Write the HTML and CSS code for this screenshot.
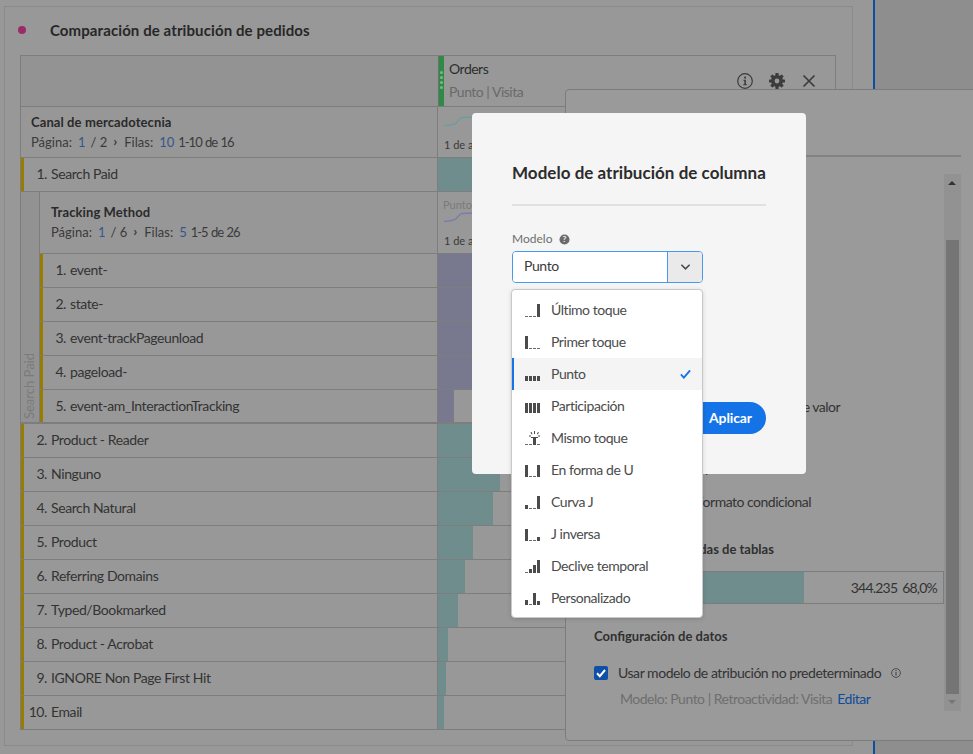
FILE: index.html
```html
<!DOCTYPE html>
<html lang="es">
<head>
<meta charset="utf-8">
<title>Comparación de atribución de pedidos</title>
<link rel="stylesheet" href="styles.css">
</head>
<body>
<div class="page">
  <main class="main">
    <section class="report">
      <header class="report-head">
        <span class="dot"></span>
        <h1 class="report-title">Comparación de atribución de pedidos</h1>
      </header>
      <div class="table">
        <div class="row head-row">
          <div class="label"></div>
          <div class="val metric">
            <div class="grip"><i></i><i></i><i></i><i></i></div>
            <div class="metric-text">
              <div class="metric-name">Orders</div>
              <div class="metric-sub">Punto | Visita</div>
            </div>
            <div class="metric-icons">
              <svg class="ico" viewBox="0 0 16 16"><circle cx="8" cy="8" r="7.300" fill="none" stroke="#3c3c3c" stroke-width="1.200"/><rect x="7.200" y="3.600" width="1.800" height="1.900" fill="#3c3c3c"/><path d="M6.400 6.800h2.500v4.400h1v1H6.200v-1h1.100V7.800h-.9z" fill="#3c3c3c"/></svg>
              <svg class="ico" viewBox="0 0 16 16"><g fill="#3c3c3c"><rect x="6.400" y="0" width="3.200" height="16" rx=".6"/><rect x="6.400" y="0" width="3.200" height="16" rx=".6" transform="rotate(45 8 8)"/><rect x="6.400" y="0" width="3.200" height="16" rx=".6" transform="rotate(90 8 8)"/><rect x="6.400" y="0" width="3.200" height="16" rx=".6" transform="rotate(135 8 8)"/><circle cx="8" cy="8" r="6"/></g><circle cx="8" cy="8" r="2.400" fill="#989898"/></svg>
              <svg class="ico" viewBox="0 0 16 16"><path d="M2.500 2.500l11 11M13.500 2.500l-11 11" stroke="#3c3c3c" stroke-width="1.700" fill="none"/></svg>
            </div>
          </div>
        </div>
        <div class="row dim-row">
          <div class="label dim">
            <div class="dim-name">Canal de mercadotecnia</div>
            <div class="pager">Página:<b>1</b>/ 2<span class="gt">›</span><span class="fil">Filas:</span><b>10</b><span class="rng">1-10 de 16</span></div>
          </div>
          <div class="val spark">
            <svg class="spark-line" viewBox="0 0 30 12"><path d="M0 10.500C5 10.500 8 9.500 11 9 14 7 15 3 18 2.500L30 2" fill="none" stroke="#6f9c9c" stroke-width="1.400"/></svg>
            <div class="spark-date">1 de agosto</div>
          </div>
        </div>
        <div class="row item"><div class="label"><span class="num">1.</span>Search Paid</div><div class="val"><span class="bar teal" style="width:100%"></span></div></div>
        <div class="nest">
          <div class="gutter"><span class="gutter-text">Search Paid</span></div>
          <div class="nest-body">
            <div class="row nest-head">
              <div class="label dim">
                <div class="dim-name">Tracking Method</div>
                <div class="pager">Página:<b>1</b>/ 6<span class="gt">›</span><span class="fil">Filas:</span><b>5</b><span class="rng">1-5 de 26</span></div>
              </div>
              <div class="val spark">
                <div class="spark-tag">Punto</div>
                <svg class="spark-line alt" viewBox="0 0 30 12"><path d="M0 10.500C5 10.500 8 9.500 11 8.500 14 6.500 15 3 18 2.500L30 2" fill="none" stroke="#7c7cae" stroke-width="1.400"/></svg>
                <div class="spark-date">1 de agosto</div>
              </div>
            </div>
            <div class="row item sub"><div class="label"><span class="num">1.</span>event-</div><div class="val"><span class="bar purple" style="width:100%"></span></div></div>
            <div class="row item sub"><div class="label"><span class="num">2.</span>state-</div><div class="val"><span class="bar purple" style="width:90%"></span></div></div>
            <div class="row item sub"><div class="label"><span class="num">3.</span>event-trackPageunload</div><div class="val"><span class="bar purple" style="width:60%"></span></div></div>
            <div class="row item sub"><div class="label"><span class="num">4.</span>pageload-</div><div class="val"><span class="bar purple" style="width:40%"></span></div></div>
            <div class="row item sub last"><div class="label"><span class="num">5.</span>event-am_InteractionTracking</div><div class="val"><span class="bar purple" style="width:16px"></span></div></div>
          </div>
        </div>
        <div class="row item"><div class="label"><span class="num">2.</span>Product - Reader</div><div class="val"><span class="bar teal" style="width:120px"></span></div></div>
        <div class="row item"><div class="label"><span class="num">3.</span>Ninguno</div><div class="val"><span class="bar teal" style="width:62px"></span></div></div>
        <div class="row item"><div class="label"><span class="num">4.</span>Search Natural</div><div class="val"><span class="bar teal" style="width:55px"></span></div></div>
        <div class="row item"><div class="label"><span class="num">5.</span>Product</div><div class="val"><span class="bar teal" style="width:35px"></span></div></div>
        <div class="row item"><div class="label"><span class="num">6.</span>Referring Domains</div><div class="val"><span class="bar teal" style="width:27px"></span></div></div>
        <div class="row item"><div class="label"><span class="num">7.</span>Typed/Bookmarked</div><div class="val"><span class="bar teal" style="width:20px"></span></div></div>
        <div class="row item"><div class="label"><span class="num">8.</span>Product - Acrobat</div><div class="val"><span class="bar teal" style="width:10px"></span></div></div>
        <div class="row item"><div class="label"><span class="num">9.</span>IGNORE Non Page First Hit</div><div class="val"><span class="bar teal" style="width:8px"></span></div></div>
        <div class="row item"><div class="label"><span class="num">10.</span>Email</div><div class="val"><span class="bar teal" style="width:6px"></span></div></div>
      </div>
    </section>
  </main>
  <aside class="rail"></aside>
</div>

<section class="panel">
  <div class="panel-head"></div>
  <div class="panel-body">
    <div class="panel-content">
      <div class="opt first">Interpretar cero como ausencia de valor</div>
      <div class="opt second">Mostrar el tiempo</div>
      <div class="opt third">Habilitar todo formato condicional</div>
      <div class="sect t1">Vista previa de celdas de tablas</div>
      <div class="preview">
        <span class="preview-bar"></span>
        <span class="preview-num">344.235</span><span class="preview-pct">68,0%</span>
      </div>
      <div class="sect t2">Configuración de datos</div>
      <div class="check-row">
        <span class="check"><svg viewBox="0 0 14 14"><path d="M3 7.200l2.800 3L11 4" fill="none" stroke="#fff" stroke-width="2"/></svg></span>
        <span>Usar modelo de atribución no predeterminado</span>
        <svg class="mini-info" viewBox="0 0 10 10"><circle cx="5" cy="5" r="4.400" fill="none" stroke="#3a3a3a" stroke-width=".8"/><rect x="4.500" y="2.200" width="1" height="1" fill="#3a3a3a"/><rect x="4.500" y="4" width="1" height="3.600" fill="#3a3a3a"/></svg>
      </div>
      <div class="model-line">Modelo: Punto | Retroactividad: Visita <a class="edit">Editar</a></div>
    </div>
    <div class="scrollbar">
      <span class="arrow up"></span>
      <span class="thumb"></span>
      <span class="arrow down"></span>
    </div>
  </div>
</section>

<section class="modal">
  <h2 class="modal-title">Modelo de atribución de columna</h2>
  <div class="modal-rule"></div>
  <div class="field-label">Modelo
    <svg class="help" viewBox="0 0 12 12"><circle cx="6" cy="6" r="5.500" fill="#6b6b6b"/><text x="6" y="9" text-anchor="middle" class="help-q">?</text></svg>
  </div>
  <div class="combo">
    <div class="combo-input">Punto</div>
    <div class="combo-btn"><svg viewBox="0 0 12 8"><path d="M1.500 1.500L6 6l4.500-4.500" fill="none" stroke="#4b4b4b" stroke-width="1.700"/></svg></div>
  </div>
  <div class="modal-foot"><button class="apply">Aplicar</button></div>

  <ul class="menu">
    <li class="opt-item"><svg class="mi" viewBox="0 0 15 14"><path class="d" d="M0 13h3v1H0zM4 13h3v1H4zM8 13h3v1H8z"/><rect x="12" y="1" width="3" height="13"/></svg>Último toque</li>
    <li class="opt-item"><svg class="mi" viewBox="0 0 15 14"><rect x="0" y="1" width="3" height="13"/><path class="d" d="M4 13h3v1H4zM8 13h3v1H8zM12 13h3v1h-3z"/></svg>Primer toque</li>
    <li class="opt-item selected"><svg class="mi" viewBox="0 0 15 14"><rect x="0" y="9" width="3" height="5"/><rect x="4" y="9" width="3" height="5"/><rect x="8" y="9" width="3" height="5"/><rect x="12" y="9" width="3" height="5"/></svg>Punto<svg class="tick" viewBox="0 0 12 10"><path d="M1 5.500L4.200 9 11 1" fill="none" stroke="#1473e6" stroke-width="2"/></svg></li>
    <li class="opt-item"><svg class="mi" viewBox="0 0 15 14"><rect x="0" y="4" width="3" height="10"/><rect x="4" y="4" width="3" height="10"/><rect x="8" y="4" width="3" height="10"/><rect x="12" y="4" width="3" height="10"/></svg>Participación</li>
    <li class="opt-item"><svg class="mi" viewBox="0 0 15 14"><path class="d" d="M0 13h3v1H0zM4 13h3v1H4zM12 13h3v1h-3z"/><path d="M6 6h7v1h-2v7H8V7H6z"/><path d="M9 0h1v3H9zM5.500 1l1 0 1 2-1 .4zM13 1l1 .4-1.300 2-.8-.5zM4 4.500h2v1H4zM13 4.500h2v1h-2z"/></svg>Mismo toque</li>
    <li class="opt-item"><svg class="mi" viewBox="0 0 15 14"><rect x="0" y="2" width="3" height="12"/><path class="d" d="M4 13h3v1H4zM8 13h3v1H8z"/><rect x="12" y="2" width="3" height="12"/></svg>En forma de U</li>
    <li class="opt-item"><svg class="mi" viewBox="0 0 15 14"><rect x="0" y="10" width="3" height="4"/><path class="d" d="M4 13h3v1H4zM8 13h3v1H8z"/><rect x="12" y="1" width="3" height="13"/></svg>Curva J</li>
    <li class="opt-item"><svg class="mi" viewBox="0 0 15 14"><rect x="0" y="2" width="3" height="12"/><path class="d" d="M4 13h3v1H4zM8 13h3v1H8z"/><rect x="12" y="10" width="3" height="4"/></svg>J inversa</li>
    <li class="opt-item"><svg class="mi" viewBox="0 0 15 14"><path class="d" d="M0 13h3v1H0z"/><rect x="4" y="10" width="3" height="4"/><rect x="8" y="6" width="3" height="8"/><rect x="12" y="1" width="3" height="13"/></svg>Declive temporal</li>
    <li class="opt-item"><svg class="mi" viewBox="0 0 15 14"><rect x="0" y="9" width="3" height="5"/><path class="d" d="M4 13h3v1H4z"/><rect x="8" y="2" width="3" height="12"/><rect x="12" y="10" width="3" height="4"/></svg>Personalizado</li>
  </ul>
</section>
</body>
</html>
```

FILE: styles.css
```css
* { box-sizing: border-box; }
html, body { margin: 0; padding: 0; height: 100%; overflow: hidden; }
body {
  background: #989898;
  font-family: "Lato", "Noto Sans", sans-serif;
  font-size: 14px;
  color: #2e2e2e;
  position: relative;
}

.page { display: flex; height: 754px; }
.main { width: 873px; padding: 6px 20px 0 4px; }
.rail { flex: 1; background: #8e8e8e; border-left: 2px solid #0c4e9f; }

.report { height: 740px; border: 1px solid #8a8a8a; padding: 0 16px 0 15px; }
.report-head { height: 46px; margin-bottom: 2px; display: flex; align-items: center; }
.dot { width: 8px; height: 8px; border-radius: 50%; background: #9b2a6b; margin-right: 24px; margin-left: -2px; flex: none; }
.report-title { margin: 0; font-size: 15px; font-weight: 700; letter-spacing: .1px; color: #272727; }

.table { border: 1px solid #7d7d7d; border-bottom: 0; height: 675px; }
.row { display: flex; border-bottom: 1px solid #7d7d7d; }
.label { flex: 1; min-width: 0; border-right: 1px solid #7d7d7d; }
.val { flex: 0 0 397px; position: relative; overflow: hidden; }

.head-row { height: 51px; background: #939393; }
.head-row .label { border-right: 0; }
.metric { display: flex; background: #989898; border-left: 1px solid #6f6f6f; }
.grip { width: 5px; background: #2e8b45; display: flex; flex-direction: column; align-items: center; gap: 2px; padding-top: 15px; flex: none; }
.grip i { width: 3px; height: 3px; border-radius: 50%; background: #7fb58d; }
.metric-text { padding: 4px 0 0 5px; letter-spacing: -.5px; }
.metric-name { height: 23px; line-height: 17px; color: #2e2e2e; }
.metric-sub { color: #6a6a6a; line-height: 17px; }
.metric-icons { margin-left: auto; display: flex; gap: 16px; padding: 17px 18px 0 0; }
.ico { width: 16px; height: 16px; display: block; }

.dim-row { height: 51px; }
.dim { padding: 7px 0 0 10px; background: #979797; }
.dim-name { font-weight: 700; font-size: 13px; line-height: 17px; letter-spacing: .1px; color: #2a2a2a; }
.pager { font-size: 13px; line-height: 18px; margin-top: 2px; color: #3a3a3a; display: flex; }
.pager b { font-weight: 400; color: #33568c; margin: 0 5px 0 6px; }
.gt { margin: 0 7px 0 6px; font-size: 14px; line-height: 15px; font-weight: 700; }
.rng { margin-left: -1px; letter-spacing: -1px; word-spacing: 1px; }

.spark { padding: 0 0 0 6px; }
.spark-line { position: absolute; left: 6px; top: 8px; width: 30px; height: 12px; display: block; }
.spark-date { position: absolute; left: 6px; bottom: 5px; font-size: 11px; line-height: 14px; white-space: nowrap; color: #3a3a3a; }
.spark-tag { position: absolute; left: 5px; top: 6px; font-size: 11px; line-height: 14px; color: #7a7a7a; }
.spark-line.alt { top: 19px; }

.item { height: 34px; }
.item .label { display: flex; align-items: center; border-left: 3px solid #977c00; font-size: 14px; line-height: 16px; letter-spacing: -.4px; color: #333; padding-bottom: 2px; }
.num { width: 23px; text-align: right; margin-right: 4px; flex: none; }
.bar { display: block; height: 100%; }
.teal { background: #6f8d8d; }
.purple { background: #78788f; }

.nest { display: flex; height: 232px; }
.gutter { width: 18px; background: #929292; flex: none; display: flex; align-items: flex-end; border-bottom: 2px solid #7d7d7d; }
.gutter-text { writing-mode: vertical-rl; transform: rotate(180deg); font-size: 13px; line-height: 14px; color: #7a7a7a; padding-top: 3px; margin-left: 1px; }
.nest-body { flex: 1; min-width: 0; border-left: 1px solid #7d7d7d; }
.nest-head { height: 62px; }
.nest-head .dim { padding: 12px 0 0 11px; }
.last { border-bottom: 2px solid #7d7d7d; }
.item.last .label { padding-bottom: 0; }

/* Settings side panel, lying over the report */
.panel {
  position: absolute; left: 565px; top: 89px; width: 418px; height: 652px;
  background: #9a9a9a; border: 1px solid #7c7c7c; border-radius: 4px;
  display: flex; flex-direction: column; overflow: hidden;
}
.panel-head { height: 67px; flex: none; border-bottom: 2px solid #838383; margin-right: 21px; }
.panel-body { display: flex; flex: 1; min-height: 0; }
.panel-content { flex: 1; min-width: 0; padding: 240px 6px 0 28px; font-size: 14px; letter-spacing: -.45px; color: #333; }
.opt, .sect, .check-row, .model-line { line-height: 20px; white-space: nowrap; }
.opt { padding-left: 24px; }
.first { letter-spacing: -.53px; }
.second { margin-top: 41px; }
.third { margin-top: 14px; letter-spacing: -.5px; }
.sect { font-weight: 700; font-size: 13px; letter-spacing: 0; color: #303030; }
.t1 { margin-top: 27px; }
.t2 { margin-top: 22px; }
.preview { margin-top: 12px; height: 33px; border: 1px solid #7c7c7c; display: flex; align-items: center; justify-content: flex-end; position: relative; padding-right: 6px; width: 350px; letter-spacing: -.8px; }
.preview-bar { position: absolute; left: 0; top: 0; bottom: 0; width: 209px; background: #6f8d8d; }
.preview-num { margin-right: 5px; }
.check-row { margin-top: 17px; display: flex; align-items: center; }
.check { width: 14px; height: 14px; background: #0e4fa8; border-radius: 2px; margin-right: 10px; display: block; }
.check svg { display: block; width: 14px; height: 14px; }
.mini-info { width: 10px; height: 10px; margin-left: 10px; }
.model-line { margin-top: 6px; padding-left: 26px; color: #6e6e6e; letter-spacing: -.5px; }
.edit { color: #0d4c9c; margin-left: 2px; }

.scrollbar { width: 17px; margin-top: 17px; height: 537px; background: #929292; margin-right: 21px; flex: none; position: relative; }
.thumb { position: absolute; left: 2px; right: 2px; top: 66px; bottom: 17px; background: #757575; }
.arrow { position: absolute; left: 4px; width: 0; height: 0; border-left: 4px solid transparent; border-right: 4px solid transparent; }
.arrow.up { top: 7px; border-bottom: 4px solid #333; }
.arrow.down { bottom: 7px; border-top: 4px solid #777; }

/* Modal dialog */
.modal {
  position: absolute; left: 472px; top: 113px; width: 334px; height: 361px;
  background: #f5f5f5; border-radius: 4px; padding: 48px 40px 0;
}
.modal-title { margin: 0; height: 24px; font-size: 17px; line-height: 24px; font-weight: 700; letter-spacing: .03px; color: #2c2c2c; white-space: nowrap; }
.modal-rule { height: 2px; background: #e1e1e1; margin-top: 19px; }
.field-label { margin-top: 25px; height: 16px; font-size: 12px; line-height: 16px; color: #6e6e6e; display: flex; align-items: center; }
.help { width: 11px; height: 11px; margin-left: 7px; }
.help-q { font-size: 9px; font-weight: 700; fill: #f5f5f5; }
.combo { margin-top: 4px; width: 191px; height: 32px; display: flex; border: 1px solid #4a97ee; border-radius: 4px; overflow: hidden; }
.combo-input { flex: 1; background: #fff; padding-left: 11px; font-size: 14px; line-height: 28px; letter-spacing: -.4px; color: #3a3a3a; border-right: 1px solid #4a97ee; }
.combo-btn { width: 34px; background: #eaeaea; display: flex; align-items: center; justify-content: center; }
.combo-btn svg { width: 11px; height: 8px; }
.modal-foot { display: flex; justify-content: flex-end; margin-top: 119px; }
.apply { width: 120px; height: 32px; border: 0; border-radius: 16px; background: #1473e6; color: #fff; font: 700 14px/32px "Lato", sans-serif; letter-spacing: -.1px; text-align: right; padding: 0 14px 0 0; }

.menu {
  position: absolute; left: 39px; top: 176px; width: 192px; height: 329px; margin: 0; padding: 4px 0;
  background: #fff; border: 1px solid #c9c9c9; border-radius: 4px; list-style: none;
  box-shadow: 0 1px 4px rgba(0,0,0,.15);
}
.opt-item { height: 32px; display: flex; align-items: center; padding: 0 0 2px 13px; font-size: 14px; letter-spacing: -.45px; color: #4b4b4b; position: relative; }
.opt-item.selected { background: #f4f4f4; box-shadow: inset 2px 0 0 #1473e6; }
.mi { width: 15px; height: 14px; margin: 2px 11px 0 0; fill: #4b4b4b; flex: none; }
.mi .d { fill: #6a6a6a; }
.tick { position: absolute; right: 11px; top: 11px; width: 11px; height: 10px; }
```
